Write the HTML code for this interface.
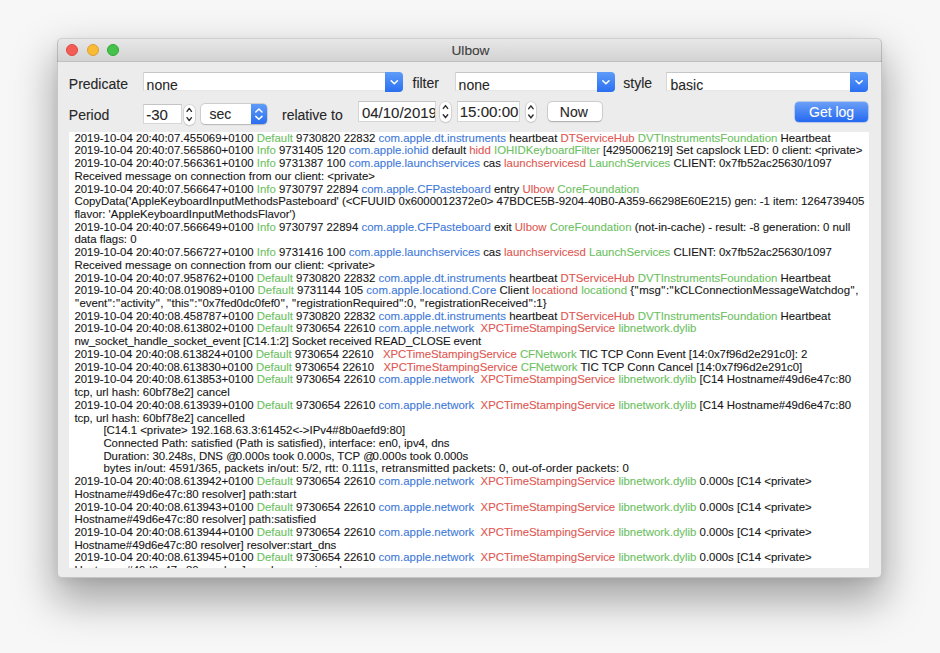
<!DOCTYPE html>
<html><head><meta charset="utf-8">
<style>
html,body{margin:0;padding:0}
body{width:940px;height:653px;overflow:hidden;background:#f7f7f7;position:relative;font-family:"Liberation Sans",sans-serif;-webkit-text-stroke:0.1px currentColor;}
.abs{position:absolute}
.win{position:absolute;left:57px;top:38px;width:825.4px;height:539.6px;background:#ececec;border-radius:5px;box-shadow:0 3px 8px rgba(0,0,0,0.06),0 20px 42px 3px rgba(0,0,0,0.34);overflow:hidden}
.wbd{position:absolute;left:57px;top:38px;width:825.4px;height:539.6px;box-sizing:border-box;border-radius:5px;border:1px solid rgba(0,0,0,0.16);border-top-color:rgba(0,0,0,0.1)}
.tb{position:absolute;left:0;top:0;width:826px;height:23px;background:linear-gradient(#e8e8e8,#d3d3d3);border-bottom:1px solid #c0c0c0}
.dot{position:absolute;top:6.4px;width:12px;height:12px;border-radius:50%;box-sizing:border-box}
.title{position:absolute;left:0.5px;width:100%;top:6px;line-height:1;text-align:center;font-size:13.7px;color:#3d3d3d}
.lbl{position:absolute;font-size:14px;line-height:1;color:#262626;white-space:nowrap}
.fld{position:absolute;background:#fff;box-sizing:border-box;border:1px solid #d6d6d6;border-top-color:#c4c4c4}
.ftx{position:absolute;line-height:1;color:#262626;white-space:nowrap}
.pop{position:absolute;background:#fff;box-sizing:border-box;border-top:1px solid #c6c6c6;border-left:1px solid #d6d6d6;border-bottom:1px solid #e6e6e6}
.popb{position:absolute;background:linear-gradient(#5e9cf8,#2b6ff0);border-radius:0 4px 4px 0}
.rpop{position:absolute;background:#fff;border-radius:4px;box-shadow:0 0 0 0.5px rgba(0,0,0,0.2),0 0.5px 1.5px rgba(0,0,0,0.15)}
.step{position:absolute;background:#fff;border-radius:5px;box-shadow:0 0 0 0.5px rgba(0,0,0,0.13),0 0.5px 2px rgba(0,0,0,0.17)}
.btn{position:absolute;background:#fff;border-radius:4px;box-shadow:0 0 0 0.5px rgba(0,0,0,0.2),0 0.5px 1.5px rgba(0,0,0,0.2)}
.bbtn{position:absolute;background:linear-gradient(#6a9ff7,#2569f0);border-radius:4px;box-shadow:0 0 0 0.5px rgba(20,80,200,0.35),0 0 2px rgba(90,150,255,0.35)}
.log{position:absolute;left:69px;top:132px;width:800px;height:436px;background:#fff;overflow:hidden}
.lw{position:absolute;left:5.4px;top:-0.3px;font-size:11.42px;line-height:12.72px;color:#161616}
.ln{height:12.72px;white-space:pre}
.g{color:#6cc161}.b{color:#4079d9}.r{color:#e05752}
.ind{display:inline-block;width:29px}.q{padding:0 0.5px}.at{letter-spacing:-2.1px;padding-left:0.2px}
</style></head><body>
<div class="win">
 <div class="tb">
  <div class="dot" style="left:9px;background:#f45d56;border:0.5px solid #dc4a42"></div>
  <div class="dot" style="left:29.5px;background:#f8bb33;border:0.5px solid #dca03a"></div>
  <div class="dot" style="left:50px;background:#44c24a;border:0.5px solid #30a936"></div>
  <div class="title">Ulbow</div>
 </div>
</div>
<div class="wbd"></div>
<!-- row 1 -->
<div class="lbl" style="left:68.8px;top:76.5px">Predicate</div>
<div class="pop" style="left:143.3px;top:71.7px;width:242.1px;height:19.5px"></div>
<div class="popb" style="left:385.4px;top:71.6px;width:17.8px;height:20px"></div>
<div class="ftx" style="left:146.6px;top:77.8px;font-size:14px">none</div>
<div class="lbl" style="left:412.5px;top:75.5px">filter</div>
<div class="pop" style="left:455.3px;top:71.7px;width:141.7px;height:19.5px"></div>
<div class="popb" style="left:597px;top:71.6px;width:17.9px;height:20px"></div>
<div class="ftx" style="left:458.6px;top:77.8px;font-size:14px">none</div>
<div class="lbl" style="left:623.3px;top:75.6px">style</div>
<div class="pop" style="left:666.4px;top:71.7px;width:183.8px;height:19.5px"></div>
<div class="popb" style="left:850.2px;top:71.6px;width:17.6px;height:20px"></div>
<div class="ftx" style="left:670.5px;top:78.3px;font-size:14px">basic</div>
<!-- row 2 -->
<div class="lbl" style="left:68.8px;top:108.2px">Period</div>
<div class="fld" style="left:143.3px;top:103.5px;width:38.3px;height:20.2px"></div>
<div class="ftx" style="left:146.2px;top:106.8px;font-size:15px">-30</div>
<div class="step" style="left:184px;top:105px;width:10.5px;height:19.6px"></div>
<div class="rpop" style="left:200.9px;top:104.4px;width:66.2px;height:19.7px;overflow:hidden"><div class="popb" style="left:49.8px;top:0;width:16.4px;height:19.7px;border-radius:0"></div></div>
<div class="ftx" style="left:209.4px;top:106.9px;font-size:14px">sec</div>
<div class="lbl" style="left:282px;top:107.5px">relative to</div>
<div class="fld" style="left:358.3px;top:100.5px;width:77.6px;height:21.4px;overflow:hidden"><div class="ftx" style="left:2.6px;top:3px;font-size:15px">04/10/2019</div></div>
<div class="step" style="left:440.4px;top:101.9px;width:10.2px;height:20px"></div>
<div class="fld" style="left:457.2px;top:100.8px;width:63.3px;height:21.7px"><div class="ftx" style="left:1.5px;top:2.4px;font-size:15.1px">15:00:00</div></div>
<div class="step" style="left:525.9px;top:102.2px;width:10px;height:19.9px"></div>
<div class="btn" style="left:547.7px;top:102.2px;width:53.9px;height:19px"></div>
<div class="ftx" style="left:559.8px;top:104.9px;font-size:14px">Now</div>
<div class="bbtn" style="left:795.2px;top:101.5px;width:72.8px;height:20.3px"></div>
<div class="ftx" style="left:809px;top:104.7px;font-size:14px;color:#fff">Get log</div>
<svg class="abs" style="left:0;top:0" width="940" height="140" viewBox="0 0 940 140"><path d="M391.20 80.80 L394.30 83.80 L397.40 80.80 M602.80 80.80 L605.90 83.80 L609.00 80.80 M856.00 80.80 L859.10 83.80 L862.20 80.80 M255.80 111.95 L258.90 109.05 L262.00 111.95 M255.80 116.35 L258.90 119.25 L262.00 116.35" fill="none" stroke="#fff" stroke-width="1.5" stroke-linecap="round" stroke-linejoin="round"/></svg>
<svg class="abs" style="left:0;top:0" width="940" height="140" viewBox="0 0 940 140"><path d="M187.05 111.35 L189.25 108.45 L191.45 111.35 M187.05 117.65 L189.25 120.55 L191.45 117.65 M443.30 108.45 L445.50 105.55 L447.70 108.45 M443.30 114.75 L445.50 117.65 L447.70 114.75 M528.70 108.70 L530.90 105.80 L533.10 108.70 M528.70 115.00 L530.90 117.90 L533.10 115.00" fill="none" stroke="#2e2e2e" stroke-width="1.4" stroke-linecap="round" stroke-linejoin="round"/></svg>
<div class="log"><div class="lw">
<div class="ln">2019-10-04 20:40:07.455069+0100 <span class="g">Default</span> 9730820 22832 <span class="b">com.apple.dt.instruments</span> heartbeat <span class="r">DTServiceHub</span> <span class="g">DVTInstrumentsFoundation</span> Heartbeat</div>
<div class="ln">2019-10-04 20:40:07.565860+0100 <span class="g">Info</span> 9731405 120 <span class="b">com.apple.iohid</span> default <span class="r">hidd</span> <span class="g">IOHIDKeyboardFilter</span> [4295006219] Set capslock LED: 0 client: &lt;private&gt;</div>
<div class="ln">2019-10-04 20:40:07.566361+0100 <span class="g">Info</span> 9731387 100 <span class="b">com.apple.launchservices</span> cas <span class="r">launchservicesd</span> <span class="g">LaunchServices</span> CLIENT: 0x7fb52ac25630/1097</div>
<div class="ln">Received message on connection from our client: &lt;private&gt;</div>
<div class="ln">2019-10-04 20:40:07.566647+0100 <span class="g">Info</span> 9730797 22894 <span class="b">com.apple.CFPasteboard</span> entry <span class="r">Ulbow</span> <span class="g">CoreFoundation</span></div>
<div class="ln">CopyData('AppleKeyboardInputMethodsPasteboard' (&lt;CFUUID 0x6000012372e0&gt; 47BDCE5B-9204-40B0-A359-66298E60E215) gen: -1 item: 1264739405</div>
<div class="ln">flavor: 'AppleKeyboardInputMethodsFlavor')</div>
<div class="ln">2019-10-04 20:40:07.566649+0100 <span class="g">Info</span> 9730797 22894 <span class="b">com.apple.CFPasteboard</span> exit <span class="r">Ulbow</span> <span class="g">CoreFoundation</span> (not-in-cache) - result: -8 generation: 0 null</div>
<div class="ln">data flags: 0</div>
<div class="ln">2019-10-04 20:40:07.566727+0100 <span class="g">Info</span> 9731416 100 <span class="b">com.apple.launchservices</span> cas <span class="r">launchservicesd</span> <span class="g">LaunchServices</span> CLIENT: 0x7fb52ac25630/1097</div>
<div class="ln">Received message on connection from our client: &lt;private&gt;</div>
<div class="ln">2019-10-04 20:40:07.958762+0100 <span class="g">Default</span> 9730820 22832 <span class="b">com.apple.dt.instruments</span> heartbeat <span class="r">DTServiceHub</span> <span class="g">DVTInstrumentsFoundation</span> Heartbeat</div>
<div class="ln" style="letter-spacing:0.026px">2019-10-04 20:40:08.019089+0100 <span class="g">Default</span> 9731144 105 <span class="b">com.apple.locationd.Core</span> Client <span class="r">locationd</span> <span class="g">locationd</span> {<span class="q">"</span>msg<span class="q">"</span>:<span class="q">"</span>kCLConnectionMessageWatchdog<span class="q">"</span>,</div>
<div class="ln" style="letter-spacing:-0.021px"><span class="q">"</span>event<span class="q">"</span>:<span class="q">"</span>activity<span class="q">"</span>, <span class="q">"</span>this<span class="q">"</span>:<span class="q">"</span>0x7fed0dc0fef0<span class="q">"</span>, <span class="q">"</span>registrationRequired<span class="q">"</span>:0, <span class="q">"</span>registrationReceived<span class="q">"</span>:1}</div>
<div class="ln">2019-10-04 20:40:08.458787+0100 <span class="g">Default</span> 9730820 22832 <span class="b">com.apple.dt.instruments</span> heartbeat <span class="r">DTServiceHub</span> <span class="g">DVTInstrumentsFoundation</span> Heartbeat</div>
<div class="ln">2019-10-04 20:40:08.613802+0100 <span class="g">Default</span> 9730654 22610 <span class="b">com.apple.network</span>  <span class="r">XPCTimeStampingService</span> <span class="g">libnetwork.dylib</span></div>
<div class="ln" style="letter-spacing:-0.085px">nw_socket_handle_socket_event [C14.1:2] Socket received READ_CLOSE event</div>
<div class="ln" style="letter-spacing:-0.035px">2019-10-04 20:40:08.613824+0100 <span class="g">Default</span> 9730654 22610   <span class="r">XPCTimeStampingService</span> <span class="g">CFNetwork</span> TIC TCP Conn Event [14:0x7f96d2e291c0]: 2</div>
<div class="ln" style="letter-spacing:-0.025px">2019-10-04 20:40:08.613830+0100 <span class="g">Default</span> 9730654 22610   <span class="r">XPCTimeStampingService</span> <span class="g">CFNetwork</span> TIC TCP Conn Cancel [14:0x7f96d2e291c0]</div>
<div class="ln">2019-10-04 20:40:08.613853+0100 <span class="g">Default</span> 9730654 22610 <span class="b">com.apple.network</span>  <span class="r">XPCTimeStampingService</span> <span class="g">libnetwork.dylib</span> [C14 Hostname#49d6e47c:80</div>
<div class="ln">tcp, url hash: 60bf78e2] cancel</div>
<div class="ln">2019-10-04 20:40:08.613939+0100 <span class="g">Default</span> 9730654 22610 <span class="b">com.apple.network</span>  <span class="r">XPCTimeStampingService</span> <span class="g">libnetwork.dylib</span> [C14 Hostname#49d6e47c:80</div>
<div class="ln">tcp, url hash: 60bf78e2] cancelled</div>
<div class="ln"><span class="ind"></span>[C14.1 &lt;private&gt; 192.168.63.3:61452&lt;-&gt;IPv4#8b0aefd9:80]</div>
<div class="ln" style="letter-spacing:-0.028px"><span class="ind"></span>Connected Path: satisfied (Path is satisfied), interface: en0, ipv4, dns</div>
<div class="ln" style="letter-spacing:-0.044px"><span class="ind"></span>Duration: 30.248s, DNS <span class="at">@</span>0.000s took 0.000s, TCP <span class="at">@</span>0.000s took 0.000s</div>
<div class="ln" style="letter-spacing:0.092px"><span class="ind"></span>bytes in/out: 4591/365, packets in/out: 5/2, rtt: 0.111s, retransmitted packets: 0, out-of-order packets: 0</div>
<div class="ln">2019-10-04 20:40:08.613942+0100 <span class="g">Default</span> 9730654 22610 <span class="b">com.apple.network</span>  <span class="r">XPCTimeStampingService</span> <span class="g">libnetwork.dylib</span> 0.000s [C14 &lt;private&gt;</div>
<div class="ln">Hostname#49d6e47c:80 resolver] path:start</div>
<div class="ln">2019-10-04 20:40:08.613943+0100 <span class="g">Default</span> 9730654 22610 <span class="b">com.apple.network</span>  <span class="r">XPCTimeStampingService</span> <span class="g">libnetwork.dylib</span> 0.000s [C14 &lt;private&gt;</div>
<div class="ln">Hostname#49d6e47c:80 resolver] path:satisfied</div>
<div class="ln">2019-10-04 20:40:08.613944+0100 <span class="g">Default</span> 9730654 22610 <span class="b">com.apple.network</span>  <span class="r">XPCTimeStampingService</span> <span class="g">libnetwork.dylib</span> 0.000s [C14 &lt;private&gt;</div>
<div class="ln" style="letter-spacing:-0.065px">Hostname#49d6e47c:80 resolver] resolver:start_dns</div>
<div class="ln">2019-10-04 20:40:08.613945+0100 <span class="g">Default</span> 9730654 22610 <span class="b">com.apple.network</span>  <span class="r">XPCTimeStampingService</span> <span class="g">libnetwork.dylib</span> 0.000s [C14 &lt;private&gt;</div>
<div class="ln">Hostname#49d6e47c:80 resolver] resolver:receive_dns</div></div></div>
</body></html>
